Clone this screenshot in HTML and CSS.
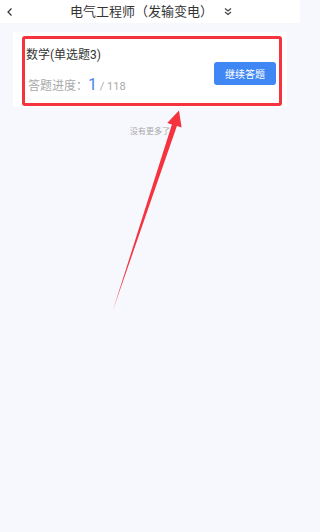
FILE: index.html
```html
<!DOCTYPE html>
<html lang="zh">
<head>
<meta charset="utf-8">
<link rel="stylesheet" href="styles.css">
</head>
<body>
<header class="topbar">
  <svg class="back" width="8" height="10" viewBox="0 0 8 10"><path d="M5.5 1.5 L2 5 L5.5 8.5" fill="none" stroke="#333" stroke-width="1.2"/></svg>
  <div class="title">电气工程师（发输变电）</div>
  <svg class="more" width="10" height="10" viewBox="0 0 10 10"><path d="M2 1.5 L5 4 L8 1.5 M2 5 L5 7.5 L8 5" fill="none" stroke="#444" stroke-width="1.2"/></svg>
</header>
<main class="content">
  <section class="card">
    <div class="info">
      <div class="name">数学(单选题3)</div>
      <div class="progress"><span class="label">答题进度：</span><span class="cur">1</span><span class="total"> / 118</span></div>
    </div>
    <button class="btn">继续答题</button>
    <div class="mark"></div>
  </section>
  <p class="nomore">没有更多了</p>
</main>
<svg class="arrow" width="300" height="532" viewBox="0 0 300 532">
  <polygon points="113,310 171.9,124.4 167.2,123 179,110.5 181.6,127.6 176.9,126.1" fill="#f5333f"/>
</svg>
</body>
</html>
```
FILE: styles.css
```css
html, body {
  margin: 0;
  padding: 0;
  background: #f7f8fd;
}
body {
  width: 300px;
  height: 532px;
  font-family: Roboto, "Noto Sans CJK SC", sans-serif;
  position: relative;
  overflow: hidden;
}
.topbar {
  height: 23px;
  background: #fff;
  display: flex;
  align-items: center;
  position: relative;
}
.back {
  margin-left: 6px;
}
.title {
  position: absolute;
  left: 0;
  right: 0;
  top: 0;
  text-align: center;
  font-size: 13px;
  line-height: 23px;
  color: #333;
  padding-right: 17px;
  pointer-events: none;
}
.more {
  position: absolute;
  left: 223px;
  top: 7px;
}
.content {
  padding: 9px 13px 0;
}
.card {
  background: #fff;
  height: 75px;
  display: flex;
  align-items: center;
  position: relative;
  padding: 0 11px 0 13px;
}
.info {
  flex: 1;
  display: flex;
  flex-direction: column;
  gap: 13px;
  padding-top: 3px;
}
.name {
  font-size: 12px;
  color: #333;
  line-height: 16px;
}
.progress {
  display: flex;
  align-items: baseline;
  color: #aaa;
  line-height: 18px;
}
.label {
  font-size: 12px;
  margin-left: 2px;
}
.cur {
  font-size: 16px;
  color: #3f87f5;
  margin-left: 0;
}
.total {
  font-size: 11px;
  white-space: pre;
}
.btn {
  width: 62px;
  height: 23px;
  border: none;
  border-radius: 3px;
  background: #3f87f5;
  color: #fff;
  font-family: Roboto, "Noto Sans CJK SC", sans-serif;
  font-size: 10px;
  padding: 0;
  margin-top: 8px;
}
.mark {
  position: absolute;
  left: 9px;
  top: 4px;
  width: 254px;
  height: 64px;
  border: 3px solid #f5333f;
  border-radius: 3px;
  pointer-events: none;
}
.nomore {
  margin: 18px 0 0;
  text-align: center;
  font-size: 8px;
  color: #aaa;
}
.arrow {
  position: absolute;
  left: 0;
  top: 0;
}
```
